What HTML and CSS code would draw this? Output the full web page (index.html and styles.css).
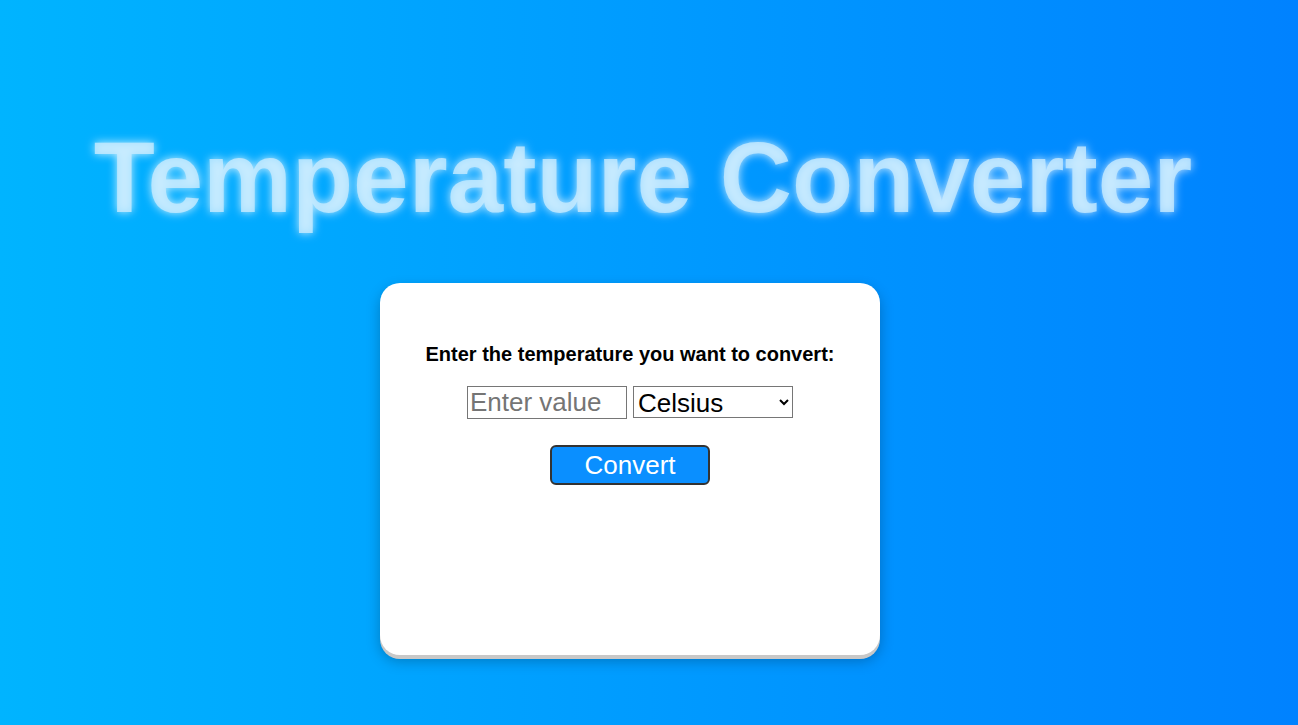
FILE: index.html
```html
<!DOCTYPE html>
<html lang="en">
<head>
<meta charset="utf-8">
<title>Temperature Converter</title>
<link rel="stylesheet" href="styles.css">
</head>
<body>
<div class="page">
  <h1 class="title">Temperature Converter</h1>
  <div class="card">
    <p class="label">Enter the temperature you want to convert:</p>
    <div class="row">
      <input class="field" type="text" placeholder="Enter value">
      <select class="unit">
        <option>Celsius</option>
        <option>Fahrenheit</option>
        <option>Kelvin</option>
      </select>
    </div>
    <button class="btn">Convert</button>
  </div>
</div>
</body>
</html>
```
FILE: styles.css
```css
html, body {
  margin: 0;
  height: 100%;
}
body {
  background: linear-gradient(to right, #00b4ff, #0082ff);
  font-family: "Liberation Sans", Arial, sans-serif;
}
.page {
  display: flex;
  flex-direction: column;
  align-items: center;
  padding-top: 114px;
}
.title {
  margin: 0 0 0 -12px;
  font-size: 100px;
  font-weight: bold;
  color: rgba(200, 235, 255, 0.8);
  text-shadow: 0 0 10px rgba(255, 255, 255, 0.8);
  line-height: 126px;
}
.card {
  margin: 43px 0 0 -38px;
  width: 500px;
  height: 372px;
  background: #fff;
  border-radius: 20px;
  box-shadow: 0 4px 0 #c8c8c8, 0 6px 14px rgba(0, 0, 0, 0.25);
  display: flex;
  flex-direction: column;
  align-items: center;
  box-sizing: border-box;
  padding-top: 59px;
}
.label {
  margin: 0;
  font-size: 20px;
  font-weight: bold;
  color: #000;
  line-height: 24px;
}
.row {
  margin-top: 20px;
  display: flex;
  gap: 6px;
}
.field {
  width: 160px;
  height: 33px;
  box-sizing: border-box;
  font-family: "Liberation Sans", Arial, sans-serif;
  font-size: 26px;
  border: 1px solid #767676;
  padding: 0 2px;
  margin: 0;
}
.field::placeholder {
  color: #757575;
}
.unit {
  width: 160px;
  height: 32px;
  box-sizing: border-box;
  font-family: "Liberation Sans", Arial, sans-serif;
  font-size: 26px;
  border: 1px solid #767676;
  border-radius: 0;
  background: #fff;
  color: #000;
  margin: 0;
}
.btn {
  margin-top: 26px;
  width: 160px;
  height: 40px;
  background: #0a8fff;
  border: 2px solid #333;
  border-radius: 6px;
  color: #fff;
  font-family: "Liberation Sans", Arial, sans-serif;
  font-size: 26px;
  padding: 0;
}
```
